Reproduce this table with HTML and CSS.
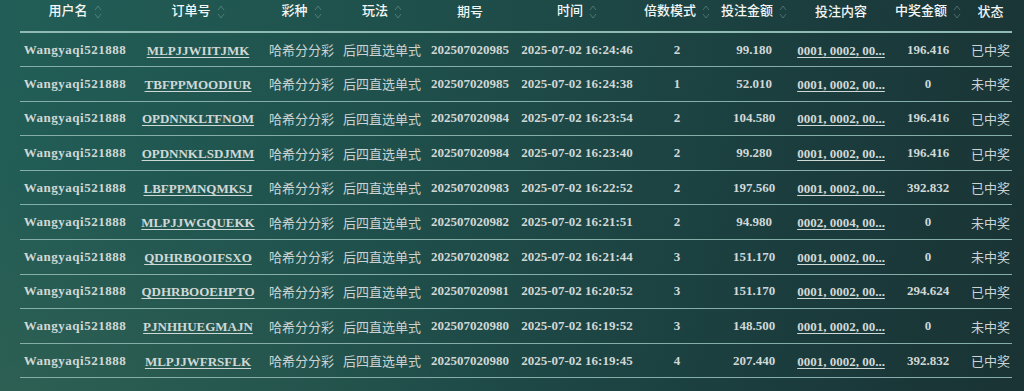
FILE: index.html
```html
<!DOCTYPE html>
<html lang="zh">
<head>
<meta charset="utf-8">
<link rel="stylesheet" href="styles.css">
</head>
<body>
<div class="page">
<table class="orders">
<colgroup>
<col class="c1"><col class="c2"><col class="c3"><col class="c4"><col class="c5"><col class="c6"><col class="c7"><col class="c8"><col class="c9"><col class="c10"><col class="c11">
</colgroup>
<thead>
<tr>
<th>用户名<svg class="sort" viewBox="0 0 8 16"><polyline points="1,6 4,2 7,6"/><polyline points="1,10 4,14 7,10"/></svg></th>
<th>订单号<svg class="sort" viewBox="0 0 8 16"><polyline points="1,6 4,2 7,6"/><polyline points="1,10 4,14 7,10"/></svg></th>
<th>彩种<svg class="sort" viewBox="0 0 8 16"><polyline points="1,6 4,2 7,6"/><polyline points="1,10 4,14 7,10"/></svg></th>
<th>玩法<svg class="sort" viewBox="0 0 8 16"><polyline points="1,6 4,2 7,6"/><polyline points="1,10 4,14 7,10"/></svg></th>
<th>期号</th>
<th>时间<svg class="sort" viewBox="0 0 8 16"><polyline points="1,6 4,2 7,6"/><polyline points="1,10 4,14 7,10"/></svg></th>
<th>倍数模式<svg class="sort" viewBox="0 0 8 16"><polyline points="1,6 4,2 7,6"/><polyline points="1,10 4,14 7,10"/></svg></th>
<th>投注金额<svg class="sort" viewBox="0 0 8 16"><polyline points="1,6 4,2 7,6"/><polyline points="1,10 4,14 7,10"/></svg></th>
<th>投注内容</th>
<th>中奖金额<svg class="sort" viewBox="0 0 8 16"><polyline points="1,6 4,2 7,6"/><polyline points="1,10 4,14 7,10"/></svg></th>
<th>状态</th>
</tr>
</thead>
<tbody>
<tr><td class="b user">Wangyaqi521888</td><td><a class="lnk">MLPJJWIITJMK</a></td><td class="zh">哈希分分彩</td><td class="zh">后四直选单式</td><td class="b">202507020985</td><td class="b">2025-07-02 16:24:46</td><td class="b">2</td><td class="b">99.180</td><td><a class="lnk">0001, 0002, 00...</a></td><td class="b">196.416</td><td class="zh">已中奖</td></tr>
<tr><td class="b user">Wangyaqi521888</td><td><a class="lnk">TBFPPMOODIUR</a></td><td class="zh">哈希分分彩</td><td class="zh">后四直选单式</td><td class="b">202507020985</td><td class="b">2025-07-02 16:24:38</td><td class="b">1</td><td class="b">52.010</td><td><a class="lnk">0001, 0002, 00...</a></td><td class="b">0</td><td class="zh">未中奖</td></tr>
<tr><td class="b user">Wangyaqi521888</td><td><a class="lnk">OPDNNKLTFNOM</a></td><td class="zh">哈希分分彩</td><td class="zh">后四直选单式</td><td class="b">202507020984</td><td class="b">2025-07-02 16:23:54</td><td class="b">2</td><td class="b">104.580</td><td><a class="lnk">0001, 0002, 00...</a></td><td class="b">196.416</td><td class="zh">已中奖</td></tr>
<tr><td class="b user">Wangyaqi521888</td><td><a class="lnk">OPDNNKLSDJMM</a></td><td class="zh">哈希分分彩</td><td class="zh">后四直选单式</td><td class="b">202507020984</td><td class="b">2025-07-02 16:23:40</td><td class="b">2</td><td class="b">99.280</td><td><a class="lnk">0001, 0002, 00...</a></td><td class="b">196.416</td><td class="zh">已中奖</td></tr>
<tr><td class="b user">Wangyaqi521888</td><td><a class="lnk">LBFPPMNQMKSJ</a></td><td class="zh">哈希分分彩</td><td class="zh">后四直选单式</td><td class="b">202507020983</td><td class="b">2025-07-02 16:22:52</td><td class="b">2</td><td class="b">197.560</td><td><a class="lnk">0001, 0002, 00...</a></td><td class="b">392.832</td><td class="zh">已中奖</td></tr>
<tr><td class="b user">Wangyaqi521888</td><td><a class="lnk">MLPJJWGQUEKK</a></td><td class="zh">哈希分分彩</td><td class="zh">后四直选单式</td><td class="b">202507020982</td><td class="b">2025-07-02 16:21:51</td><td class="b">2</td><td class="b">94.980</td><td><a class="lnk">0002, 0004, 00...</a></td><td class="b">0</td><td class="zh">未中奖</td></tr>
<tr><td class="b user">Wangyaqi521888</td><td><a class="lnk">QDHRBOOIFSXO</a></td><td class="zh">哈希分分彩</td><td class="zh">后四直选单式</td><td class="b">202507020982</td><td class="b">2025-07-02 16:21:44</td><td class="b">3</td><td class="b">151.170</td><td><a class="lnk">0001, 0002, 00...</a></td><td class="b">0</td><td class="zh">未中奖</td></tr>
<tr><td class="b user">Wangyaqi521888</td><td><a class="lnk">QDHRBOOEHPTO</a></td><td class="zh">哈希分分彩</td><td class="zh">后四直选单式</td><td class="b">202507020981</td><td class="b">2025-07-02 16:20:52</td><td class="b">3</td><td class="b">151.170</td><td><a class="lnk">0001, 0002, 00...</a></td><td class="b">294.624</td><td class="zh">已中奖</td></tr>
<tr><td class="b user">Wangyaqi521888</td><td><a class="lnk">PJNHHUEGMAJN</a></td><td class="zh">哈希分分彩</td><td class="zh">后四直选单式</td><td class="b">202507020980</td><td class="b">2025-07-02 16:19:52</td><td class="b">3</td><td class="b">148.500</td><td><a class="lnk">0001, 0002, 00...</a></td><td class="b">0</td><td class="zh">未中奖</td></tr>
<tr><td class="b user">Wangyaqi521888</td><td><a class="lnk">MLPJJWFRSFLK</a></td><td class="zh">哈希分分彩</td><td class="zh">后四直选单式</td><td class="b">202507020980</td><td class="b">2025-07-02 16:19:45</td><td class="b">4</td><td class="b">207.440</td><td><a class="lnk">0001, 0002, 00...</a></td><td class="b">392.832</td><td class="zh">已中奖</td></tr>
</tbody>
</table>
</div>
</body>
</html>
```

FILE: styles.css
```css
html, body {
  margin: 0;
  padding: 0;
  height: 100%;
}
body {
  background: linear-gradient(100deg, #225e57 0%, #1f4f4b 40%, #1b3d3e 75%, #1a3334 100%);
  overflow: hidden;
}
.page {
  width: 1024px;
  height: 391px;
  padding: 0 12px 0 20px;
  box-sizing: border-box;
  background: radial-gradient(ellipse 500px 220px at 0% 100%, rgba(60, 100, 80, 0.45), rgba(60, 100, 80, 0) 100%);
}
.orders {
  width: 992px;
  table-layout: fixed;
  border-collapse: collapse;
  color: #d0d8d6;
}
.c1 { width: 110px; }
.c2 { width: 136px; }
.c3 { width: 71px; }
.c4 { width: 90px; }
.c5 { width: 86px; }
.c6 { width: 128px; }
.c7 { width: 72px; }
.c8 { width: 82px; }
.c9 { width: 92px; }
.c10 { width: 82px; }
.c11 { width: 43px; }
th {
  height: 32px;
  padding: 0 0 11px 0;
  font-family: "Noto Sans CJK SC", sans-serif;
  font-size: 13px;
  font-weight: 500;
  color: #f2f6f5;
  text-align: center;
  white-space: nowrap;
  border-bottom: 2px solid #8fb9b3;
  box-sizing: border-box;
}
td {
  height: 34.6px;
  padding: 0;
  text-align: center;
  white-space: nowrap;
  border-bottom: 1.5px solid #86aea9;
  box-sizing: border-box;
}
.b {
  font-family: "Liberation Serif", serif;
  font-weight: bold;
  font-size: 13px;
  color: #d0d8d6;
}
.user {
  letter-spacing: 0.5px;
}
.zh {
  font-family: "Noto Sans CJK SC", sans-serif;
  font-size: 13px;
  color: #cbd4d2;
}
.lnk {
  font-family: "Liberation Serif", serif;
  font-weight: bold;
  font-size: 13px;
  color: #d0d8d6;
  text-decoration: underline;
  text-underline-offset: 2px;
}
.sort {
  width: 8px;
  height: 16px;
  margin-left: 6px;
  vertical-align: middle;
  fill: none;
  stroke: rgba(160, 195, 190, 0.35);
  stroke-width: 1;
}
```
